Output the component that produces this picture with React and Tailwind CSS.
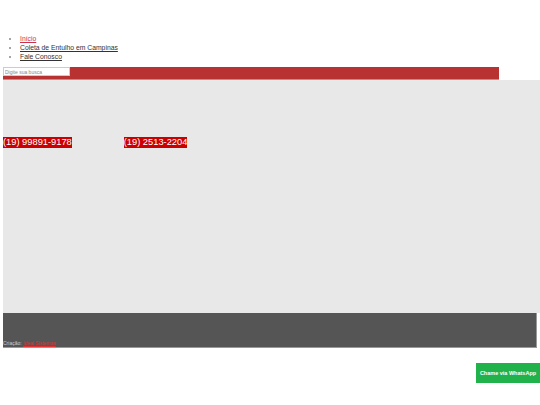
import React from "react";

const App = () => {
  return (
    <div className="relative w-[540px] h-[405px] bg-white overflow-hidden" style={{ fontFamily: "'Liberation Sans', Arial, sans-serif" }}>
      {/* menu */}
      <ul className="pt-[34px] pl-[20px] list-disc text-[6.8px] leading-[9px] text-[#333] marker:text-[#888]">
        <li>
          <a href="#" className="underline text-[#c8324f]">Início</a>
        </li>
        <li>
          <a href="#" className="underline text-[#333]">Coleta de Entulho em Campinas</a>
        </li>
        <li>
          <a href="#" className="underline text-[#333]">Fale Conosco</a>
        </li>
      </ul>

      {/* search bar */}
      <div className="mt-[6px] ml-[3px] w-[496px] h-[13px] bg-[#b83232] border-b border-[#c98888]">
        <input
          type="text"
          placeholder="Digite sua busca"
          className="w-[67px] h-[9px] bg-white border border-[#ccc] text-[5px] px-[1px] placeholder:text-[#888] outline-none block"
        />
      </div>

      {/* content */}
      <div className="ml-[3px] h-[233px] bg-[#e8e8e8] flex gap-[52px] pt-[57px] text-[9.3px] leading-[11px]">
        <span className="bg-[#c00] text-white h-fit">(19) 99891-9178</span>
        <span className="bg-[#c00] text-white h-fit">(19) 2513-2204</span>
      </div>

      {/* footer */}
      <div className="ml-[3px] w-[534px] h-[35px] bg-[#555] border-r border-b border-[#999] flex items-end">
        <p className="text-[5px] leading-[8px] text-[#ccc]">
          Criação: <a href="#" className="underline text-[#d33]">Ideal Sistemas</a>
        </p>
      </div>

      <a
        href="#"
        className="absolute left-[476px] top-[363px] w-[64px] h-[20px] bg-[#22b24c] text-white font-bold text-[5.5px] flex items-center justify-center"
      >
        Chame via WhatsApp
      </a>
    </div>
  );
};

export default App;
